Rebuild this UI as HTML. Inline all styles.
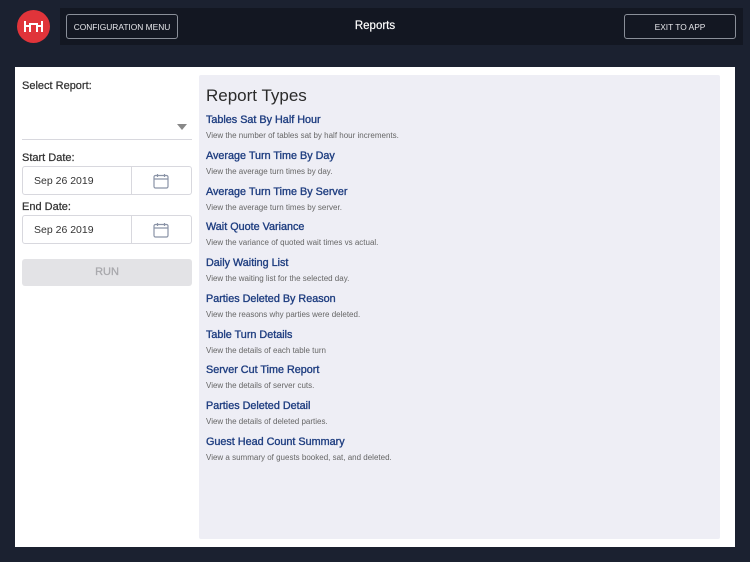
<!DOCTYPE html>
<html><head><style>
*{margin:0;padding:0;box-sizing:border-box}
body{width:750px;height:562px;background:#1b2130;font-family:"Liberation Sans",sans-serif;position:relative;overflow:hidden}
.hdr{position:absolute;left:60px;top:8px;width:683px;height:37px;background:#131722}
.logo{position:absolute;left:17px;top:10px;width:33px;height:33px;border-radius:50%;background:#e0343a}
.btn{position:absolute;top:14px;height:25px;border:1px solid #8a8f99;border-radius:3px;color:#e6e6ea;font-size:8.4px;display:flex;align-items:center;justify-content:center;white-space:nowrap}
.title{position:absolute;left:0;width:750px;top:20px;text-align:center;color:#fff;font-size:11.5px;-webkit-text-stroke:.2px #fff}
.panel{position:absolute;left:15px;top:67px;width:720px;height:480px;background:#fff}
.lbl{position:absolute;left:22px;font-size:11px;color:#333;-webkit-text-stroke:.25px #333}
.date{position:absolute;left:22px;width:170px;height:29px;border:1px solid #d8d8de;border-radius:3px;font-size:10.5px;color:#333}
.date span{position:absolute;left:11px;top:8px}
.date i{position:absolute;left:108px;top:0;bottom:0;border-left:1px solid #d8d8de}
.date svg{position:absolute;left:130px;top:6px}
.run{position:absolute;left:22px;top:259px;width:170px;height:27px;background:#e3e3e6;border-radius:3px;color:#a9a9ad;font-size:11px;text-align:center;line-height:27px;-webkit-text-stroke:.3px #a9a9ad}
.gray{position:absolute;left:199px;top:75px;width:521px;height:464px;background:#eeeef5;border-radius:2px}
h1{position:absolute;left:206px;top:86px;font-size:17px;font-weight:normal;color:#2b2b2b}
.it{position:absolute;left:206px}
.it b{display:block;font-size:10.8px;font-weight:normal;color:#1f3e80;-webkit-text-stroke:.35px #1f3e80}
.it p{font-size:8px;color:#666;margin-top:5px}
</style></head><body>
<div class="hdr"></div>
<div class="logo"><svg width="33" height="33" viewBox="0 0 33 33"><g stroke="#fff" stroke-width="2" fill="none"><path d="M8 11v11M25 11v11M8 16h5v6M25 16h-5v6M12 14h9"/></g></svg></div>
<div class="btn" style="left:66px;width:112px">CONFIGURATION MENU</div>
<div class="title">Reports</div>
<div class="btn" style="left:624px;width:112px">EXIT TO APP</div>
<div class="panel"></div>
<div class="lbl" style="top:80px">Select Report:</div>
<svg style="position:absolute;left:177px;top:124px" width="10" height="6"><path d="M0 0h10L5 6z" fill="#888"/></svg>
<div style="position:absolute;left:22px;top:139px;width:170px;height:1px;background:#d8d8de"></div>
<div class="lbl" style="top:152px">Start Date:</div>
<div class="date" style="top:166px"><span>Sep 26 2019</span><i></i><svg width="16" height="16" viewBox="0 0 16 16"><g stroke="#8a93a6" stroke-width="1.2" fill="none"><rect x="1" y="2.5" width="14" height="12.5" rx="1.5"/><path d="M1 6h14M4.5 1v3M11.5 1v3"/></g></svg></div>
<div class="lbl" style="top:201px">End Date:</div>
<div class="date" style="top:215px"><span>Sep 26 2019</span><i></i><svg width="16" height="16" viewBox="0 0 16 16"><g stroke="#8a93a6" stroke-width="1.2" fill="none"><rect x="1" y="2.5" width="14" height="12.5" rx="1.5"/><path d="M1 6h14M4.5 1v3M11.5 1v3"/></g></svg></div>
<div class="run">RUN</div>
<div class="gray"></div>
<h1>Report Types</h1>
<div class="it" style="top:114px"><b>Tables Sat By Half Hour</b><p>View the number of tables sat by half hour increments.</p></div>
<div class="it" style="top:150px"><b>Average Turn Time By Day</b><p>View the average turn times by day.</p></div>
<div class="it" style="top:186px"><b>Average Turn Time By Server</b><p>View the average turn times by server.</p></div>
<div class="it" style="top:221px"><b>Wait Quote Variance</b><p>View the variance of quoted wait times vs actual.</p></div>
<div class="it" style="top:257px"><b>Daily Waiting List</b><p>View the waiting list for the selected day.</p></div>
<div class="it" style="top:293px"><b>Parties Deleted By Reason</b><p>View the reasons why parties were deleted.</p></div>
<div class="it" style="top:329px"><b>Table Turn Details</b><p>View the details of each table turn</p></div>
<div class="it" style="top:364px"><b>Server Cut Time Report</b><p>View the details of server cuts.</p></div>
<div class="it" style="top:400px"><b>Parties Deleted Detail</b><p>View the details of deleted parties.</p></div>
<div class="it" style="top:436px"><b>Guest Head Count Summary</b><p>View a summary of guests booked, sat, and deleted.</p></div>
</body></html>
